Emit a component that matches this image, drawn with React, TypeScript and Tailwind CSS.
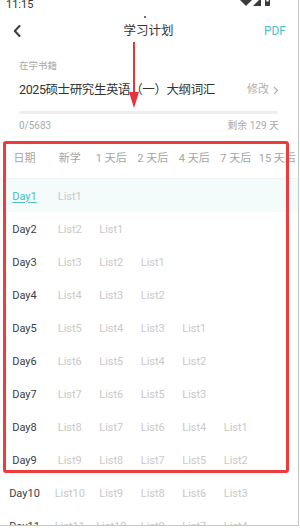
import React from 'react';

const COLS = ['日期', '新学', '1 天后', '2 天后', '4 天后', '7 天后', '15 天后'];
const OFFSETS = [0, 1, 2, 4, 7, 15];
const DAYS = Array.from({ length: 12 }, (_, i) => i + 1);

function StatusIcons() {
  return (
    <svg width="34" height="10" viewBox="0 0 34 10" className="mt-[-2px]">
      {/* wifi */}
      <path d="M0 2 L6 -4 L12 2 L6 8 Z" fill="#3a3a3a" />
      {/* signal */}
      <path d="M13 8 L21 0 L21 8 Z" fill="#3a3a3a" />
      {/* battery */}
      <rect x="25" y="-1" width="5" height="9" rx="0.8" fill="#3a3a3a" />
      <rect x="26.3" y="2" width="2.4" height="1.5" fill="#fff" />
    </svg>
  );
}

export default function App() {
  return (
    <div className="relative w-[299px] h-[526px] overflow-hidden bg-white border-r border-b border-[#c3c7cc] font-['Roboto','Noto_Sans_CJK_SC',sans-serif]">
      {/* Status bar */}
      <div className="h-[12px] flex items-start justify-between pl-[6px] pr-[24px]">
        <span className="text-[11px] leading-[10px] text-[#333]">11:15</span>
        <StatusIcons />
      </div>

      {/* Nav */}
      <div className="h-[38px] flex items-center justify-between pl-[13px] pr-[12px]">
        <svg width="8" height="12" viewBox="0 0 8 12">
          <path d="M6.5 1 L1.8 6 L6.5 11" fill="none" stroke="#3b3d4a" strokeWidth="2" strokeLinecap="round" strokeLinejoin="round" />
        </svg>
        <span className="text-[12.5px] text-[#333] ml-[12px] whitespace-nowrap">学习计划</span>
        <span className="text-[12px] text-[#4dc2c6]">PDF</span>
      </div>

      {/* Book info */}
      <div className="px-[19px]">
        <div className="pt-[9px] text-[9.5px] leading-[14px] text-[#aaa]">在学书籍</div>
        <div className="mt-[7px] h-[20px] flex items-center justify-between">
          <span className="text-[12.5px] leading-[20px] text-[#333] tracking-[-0.4px] whitespace-nowrap">2025硕士研究生英语（一）大纲词汇</span>
          <span className="flex items-center gap-[4px] text-[11px] text-[#b0b0b0] whitespace-nowrap">
            修改
            <svg width="6" height="9" viewBox="0 0 6 9">
              <path d="M1 1 L4.5 4.5 L1 8" fill="none" stroke="#b0b0b0" strokeWidth="1.2" />
            </svg>
          </span>
        </div>
        <div className="mt-[11px] mr-[1px] h-[3px] rounded-full bg-[#eeeeee]" />
        <div className="mt-[5px] h-[14px] flex items-center justify-between text-[10px] leading-[14px] text-[#aaa]">
          <span>0/5683</span>
          <span>剩余 129 天</span>
        </div>
      </div>

      {/* Table */}
      <div className="mt-[8px] w-[400px]">
        <div className="h-[38px] grid grid-cols-[49px_repeat(7,41.5px)] items-center border-b border-[#f3f3f3] text-[11px] text-[#a5a5a5]">
          {COLS.map((c) => (
            <div key={c} className="text-center whitespace-nowrap">{c}</div>
          ))}
        </div>
        {DAYS.map((d) => (
          <div
            key={d}
            className={`h-[33px] pt-[3px] grid grid-cols-[49px_repeat(7,41.5px)] items-center text-[11px] ${d === 1 ? 'bg-[#f3fbfb]' : ''}`}
          >
            <div className={`text-center ${d === 1 ? 'text-[#4cbfc3] underline underline-offset-2' : 'text-[#3a3d4a]'}`}>Day{d}</div>
            {OFFSETS.map((o) => (
              <div key={o} className="text-center text-[#c9c9c9]">
                {d - o >= 1 ? `List${d - o}` : ''}
              </div>
            ))}
          </div>
        ))}
      </div>

      {/* Annotation: red box */}
      <div className="absolute left-[3px] top-[141px] w-[286px] h-[332px] border-[3px] border-[#ee3b3b] rounded-[3px] pointer-events-none" />
      {/* Annotation: red arrow */}
      <svg className="absolute left-[128px] top-[42px]" width="12" height="68" viewBox="0 0 12 68">
        <path d="M6 0 L6 52" stroke="#e8333a" strokeWidth="2" />
        <path d="M1 50 L11 50 L6 66 Z" fill="#e8333a" />
      </svg>
      <div className="absolute left-[144px] top-[16px] w-[2px] h-[2px] rounded-full bg-[#444]" />
    </div>
  );
}
